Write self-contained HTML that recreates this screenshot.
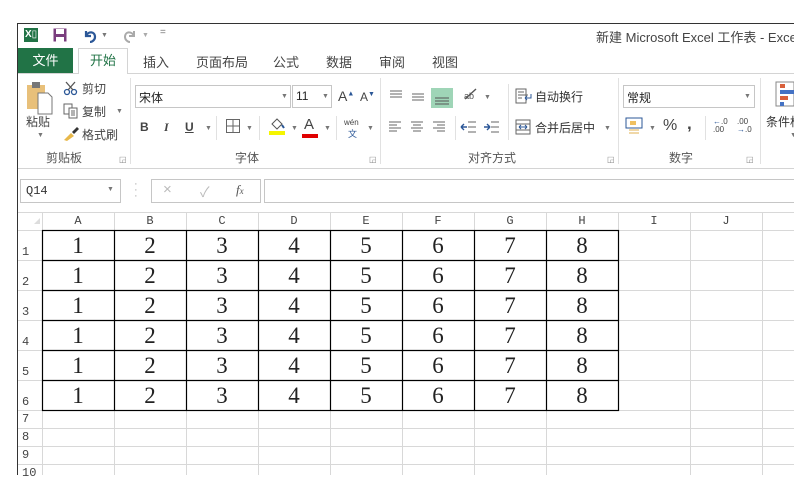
<!DOCTYPE html>
<html><head><meta charset="utf-8"><style>
*{margin:0;padding:0;box-sizing:border-box}
body{width:794px;height:475px;overflow:hidden;background:#fff;position:relative;font-family:"Liberation Sans","Noto Sans CJK SC",sans-serif;font-size:12px;color:#444}
.a{position:absolute;white-space:nowrap}
.cj{font-family:"Liberation Sans","Noto Sans CJK SC",sans-serif}
.sep{position:absolute;width:1px;background:#e1e1e1}
.dd{position:absolute;font-size:7px;color:#777}
.lbl{position:absolute;top:149px;font-size:12px;color:#555}
.col{position:absolute;top:213px;height:17px;font-family:"Liberation Mono",monospace;font-size:12px;color:#444;text-align:center;line-height:17px}
.rh{position:absolute;left:18px;width:24px;font-family:"Liberation Mono",monospace;font-size:12px;color:#444;padding-left:4px}
.n{position:absolute;width:72px;text-align:center;font-family:"Liberation Serif",serif;font-size:23px;color:#222}
</style></head><body>
<!-- window border -->
<div class="a" style="left:17px;top:23px;width:777px;height:1px;background:#333"></div>
<div class="a" style="left:17px;top:23px;width:1px;height:452px;background:#333"></div>

<!-- title bar -->
<div class="a" style="left:24px;top:28px;width:14px;height:14px;background:#217346;color:#fff;font-size:10px;font-weight:bold;line-height:14px;padding-left:1px">X<span style="font-weight:normal">▯</span></div>
<svg class="a" style="left:53px;top:28px" width="14" height="14"><rect x="0.5" y="0.5" width="13" height="13" fill="#7a3d7e"/><rect x="3" y="1" width="8" height="5" fill="#fff"/><rect x="3" y="9" width="8" height="5" fill="#fff"/></svg>
<svg class="a" style="left:82px;top:27px" width="16" height="16"><path d="M4 4 L4 9 L9 9" fill="none" stroke="#2b5797" stroke-width="2.2"/><path d="M4 9 C6 4 13 4 13 10 C13 13 10 15 8 15" fill="none" stroke="#2b5797" stroke-width="2.2"/></svg>
<div class="dd" style="left:101px;top:32px">▼</div>
<svg class="a" style="left:122px;top:27px" width="16" height="16"><path d="M12 4 L12 9 L7 9" fill="none" stroke="#aaa" stroke-width="2"/><path d="M12 9 C10 4 3 4 3 10 C3 13 6 15 8 15" fill="none" stroke="#aaa" stroke-width="2"/></svg>
<div class="dd" style="left:142px;top:32px;color:#aaa">▼</div>
<div class="a" style="left:160px;top:27px;font-size:10px;color:#777">=</div>
<div class="a" style="left:596px;top:27px;font-size:13px;color:#444">新建 Microsoft Excel 工作表 - Excel</div>

<!-- tabs -->
<div class="a" style="left:18px;top:48px;width:55px;height:25px;background:#217346;color:#fff;font-size:13px;text-align:center;line-height:25px">文件</div>
<div class="a" style="left:78px;top:48px;width:50px;height:26px;background:#fff;border:1px solid #d4d4d4;border-bottom:none;color:#217346;font-size:13px;text-align:center;line-height:24px;z-index:2">开始</div>
<div class="a" style="left:143px;top:52px;font-size:13px">插入</div>
<div class="a" style="left:196px;top:52px;font-size:13px">页面布局</div>
<div class="a" style="left:273px;top:52px;font-size:13px">公式</div>
<div class="a" style="left:326px;top:52px;font-size:13px">数据</div>
<div class="a" style="left:379px;top:52px;font-size:13px">审阅</div>
<div class="a" style="left:432px;top:52px;font-size:13px">视图</div>
<div class="a" style="left:18px;top:73px;width:776px;height:1px;background:#d4d4d4"></div>
<div class="a" style="left:18px;top:168px;width:776px;height:1px;background:#d4d4d4"></div>

<!-- clipboard -->
<svg class="a" style="left:26px;top:81px" width="28" height="34"><rect x="1" y="4" width="18" height="24" fill="#e8c07a"/><rect x="6" y="1" width="8" height="6" fill="#777"/><path d="M12 12 H22 L26 16 V33 H12 Z" fill="#fff" stroke="#777"/></svg>
<div class="a" style="left:26px;top:113px;font-size:12px">粘贴</div>
<div class="dd" style="left:37px;top:132px">▼</div>
<svg class="a" style="left:63px;top:80px" width="16" height="16"><circle cx="4" cy="12" r="2.5" fill="none" stroke="#2b5797" stroke-width="1.3"/><circle cx="11" cy="12" r="2.5" fill="none" stroke="#2b5797" stroke-width="1.3"/><path d="M5 10 L12 2 M10 10 L3 2" stroke="#555" stroke-width="1.3"/></svg>
<div class="a" style="left:82px;top:80px">剪切</div>
<svg class="a" style="left:63px;top:103px" width="16" height="16"><rect x="1" y="1" width="8" height="10" fill="#fff" stroke="#666"/><rect x="6" y="5" width="8" height="10" fill="#fff" stroke="#666"/><path d="M8 8h4M8 10h4M8 12h4" stroke="#666"/></svg>
<div class="a" style="left:82px;top:103px">复制</div>
<div class="dd" style="left:116px;top:108px">▼</div>
<svg class="a" style="left:63px;top:126px" width="17" height="15"><path d="M1 14 L8 7 L11 10 L4 15 Z" fill="#e8b84a"/><path d="M9 6 L14 1 L16 3 L11 8 Z" fill="#333"/></svg>
<div class="a" style="left:82px;top:126px">格式刷</div>
<div class="lbl" style="left:46px">剪贴板</div>
<div class="a" style="left:119px;top:155px;font-size:8px;color:#888">◲</div>
<div class="sep" style="left:130px;top:78px;height:86px"></div>

<!-- font group -->
<div class="a" style="left:135px;top:85px;width:156px;height:23px;border:1px solid #c6c6c6;padding:3px 3px;font-size:12px;color:#222">宋体</div>
<div class="dd" style="left:281px;top:93px">▼</div>
<div class="a" style="left:292px;top:85px;width:40px;height:23px;border:1px solid #c6c6c6;padding:3px 3px;font-size:12px;color:#222">11</div>
<div class="dd" style="left:322px;top:93px">▼</div>
<div class="a" style="left:338px;top:88px;font-size:14px;color:#444">A<sup style="font-size:7px;color:#2b5797">▲</sup></div>
<div class="a" style="left:360px;top:90px;font-size:12px;color:#444">A<sup style="font-size:7px;color:#2b5797">▼</sup></div>
<div class="a" style="left:140px;top:120px;font-weight:bold;color:#444">B</div>
<div class="a" style="left:164px;top:120px;font-style:italic;font-family:'Liberation Serif',serif;font-weight:bold;color:#444">I</div>
<div class="a" style="left:185px;top:120px;font-weight:bold;text-decoration:underline;color:#444">U</div>
<div class="dd" style="left:205px;top:125px">▼</div>
<div class="sep" style="left:216px;top:116px;height:24px"></div>
<svg class="a" style="left:226px;top:119px" width="14" height="14"><rect x="0.5" y="0.5" width="13" height="13" fill="none" stroke="#666"/><path d="M7 0V14M0 7H14" stroke="#666"/></svg>
<div class="dd" style="left:246px;top:125px">▼</div>
<div class="sep" style="left:259px;top:116px;height:24px"></div>
<svg class="a" style="left:268px;top:116px" width="18" height="20"><path d="M4 8 L9 3 L14 8 L9 13 Z" fill="#fff" stroke="#555"/><path d="M14 9 L16 12" stroke="#2b5797" stroke-width="2"/><rect x="1" y="15" width="16" height="4" fill="#f5f500"/></svg>
<div class="dd" style="left:291px;top:125px">▼</div>
<div class="a" style="left:304px;top:116px;font-size:15px;color:#444">A</div>
<div class="a" style="left:302px;top:134px;width:16px;height:4px;background:#e00000"></div>
<div class="dd" style="left:324px;top:125px">▼</div>
<div class="sep" style="left:336px;top:116px;height:24px"></div>
<div class="a" style="left:344px;top:118px;font-size:8px;color:#444">wén</div>
<div class="a" style="left:348px;top:127px;font-size:9px;color:#2b5797">文</div>
<div class="dd" style="left:367px;top:125px">▼</div>
<div class="lbl" style="left:235px">字体</div>
<div class="a" style="left:369px;top:155px;font-size:8px;color:#888">◲</div>
<div class="sep" style="left:380px;top:78px;height:86px"></div>

<!-- alignment -->
<svg class="a" style="left:388px;top:88px" width="90" height="20"><g stroke="#666"><path d="M2 3h12M2 6h12M2 9h12"/><path d="M24 6h12M24 9h12M24 12h12"/></g><rect x="43" y="0" width="22" height="20" fill="#9fd5b7"/><g stroke="#555"><path d="M47 10h14M47 13h14M47 16h14"/></g></svg>
<svg class="a" style="left:462px;top:87px" width="20" height="16"><path d="M3 12 L14 2" stroke="#555" stroke-width="1.4"/><text x="2" y="12" font-size="9" fill="#555" font-family="Liberation Sans">ab</text></svg>
<div class="dd" style="left:484px;top:94px">▼</div>
<svg class="a" style="left:388px;top:120px" width="120" height="14"><g stroke="#666"><path d="M1 2h12M1 5h8M1 8h12M1 11h8"/><path d="M23 2h12M25 5h8M23 8h12M25 11h8"/><path d="M45 2h12M49 5h8M45 8h12M49 11h8"/></g><g stroke="#2b5797" stroke-width="1.4"><path d="M73 7h6M73 7l3-3M73 7l3 3"/><path d="M96 7h6M102 7l-3-3M102 7l-3 3"/></g><g stroke="#666"><path d="M80 2h8M80 7h8M80 12h8M103 2h8M103 7h8M103 12h8"/></g></svg>
<div class="sep" style="left:455px;top:116px;height:24px"></div>
<div class="sep" style="left:508px;top:84px;height:56px"></div>
<svg class="a" style="left:515px;top:88px" width="18" height="16"><rect x="1" y="1" width="10" height="14" fill="#fff" stroke="#666"/><path d="M3 4h6M3 7h10M3 10h4" stroke="#666"/><path d="M16 6 V10 H10 M10 10 l2-2 M10 10 l2 2" stroke="#2b5797" fill="none"/></svg>
<div class="a" style="left:535px;top:88px;color:#333">自动换行</div>
<svg class="a" style="left:515px;top:119px" width="16" height="16"><rect x="1" y="1" width="14" height="14" fill="#fff" stroke="#666"/><path d="M1 5h14M1 11h14" stroke="#666"/><path d="M4 8h8M4 8l2-2M4 8l2 2M12 8l-2-2M12 8l-2 2" stroke="#2b5797" fill="none"/></svg>
<div class="a" style="left:535px;top:119px;color:#333">合并后居中</div>
<div class="dd" style="left:604px;top:125px">▼</div>
<div class="lbl" style="left:468px">对齐方式</div>
<div class="a" style="left:607px;top:155px;font-size:8px;color:#888">◲</div>
<div class="sep" style="left:618px;top:78px;height:86px"></div>

<!-- number -->
<div class="a" style="left:623px;top:85px;width:132px;height:23px;border:1px solid #c6c6c6;padding:3px 3px;font-size:12px;color:#222">常规</div>
<div class="dd" style="left:744px;top:93px">▼</div>
<svg class="a" style="left:625px;top:117px" width="20" height="18"><rect x="1" y="1" width="16" height="10" fill="#fff" stroke="#2b5797"/><rect x="5" y="4" width="6" height="4" fill="#f0c060"/><path d="M4 13h10M4 16h10" stroke="#e0b050"/></svg>
<div class="dd" style="left:649px;top:125px">▼</div>
<div class="a" style="left:663px;top:117px;font-size:16px;color:#444">%</div>
<div class="a" style="left:687px;top:114px;font-size:17px;font-weight:bold;color:#444">,</div>
<div class="sep" style="left:705px;top:116px;height:24px"></div>
<div class="a" style="left:713px;top:118px;font-size:8px;line-height:8px;color:#444"><span style="color:#2b5797">←</span>.0<br>.00</div>
<div class="a" style="left:737px;top:118px;font-size:8px;line-height:8px;color:#444">.00<br><span style="color:#2b5797">→</span>.0</div>
<div class="lbl" style="left:669px">数字</div>
<div class="a" style="left:746px;top:155px;font-size:8px;color:#888">◲</div>
<div class="sep" style="left:760px;top:78px;height:86px"></div>
<svg class="a" style="left:775px;top:81px" width="19" height="30"><rect x="1" y="1" width="18" height="24" fill="#fff" stroke="#888"/><rect x="5" y="3" width="5" height="4" fill="#d9603b"/><rect x="5" y="9" width="14" height="4" fill="#4472c4"/><rect x="5" y="15" width="8" height="4" fill="#d9603b"/><rect x="5" y="21" width="4" height="4" fill="#4472c4"/></svg>
<div class="a" style="left:766px;top:113px;font-size:12px;color:#333">条件格</div>
<div class="dd" style="left:790px;top:132px">▼</div>

<!-- formula bar -->
<div class="a" style="left:20px;top:179px;width:101px;height:24px;border:1px solid #c6c6c6;font-family:'Liberation Mono',monospace;font-size:12px;padding:4px 5px;color:#333">Q14</div>
<div class="dd" style="left:107px;top:186px">▼</div>
<div class="a" style="left:134px;top:181px;font-size:11px;color:#aaa;line-height:6px">·<br>·<br>·</div>
<div class="a" style="left:151px;top:179px;width:110px;height:24px;border:1px solid #c6c6c6"></div>
<div class="a" style="left:163px;top:181px;font-size:15px;color:#bbb">×</div>
<div class="a" style="left:200px;top:182px;font-size:14px;color:#bbb">✓</div>
<div class="a" style="left:236px;top:182px;font-family:'Liberation Serif',serif;font-style:italic;font-size:13px;color:#555">f<span style="font-size:9px">x</span></div>
<div class="a" style="left:264px;top:179px;width:540px;height:24px;border:1px solid #c6c6c6"></div>

<!-- grid -->
<svg class="a" style="left:18px;top:210px" width="776" height="265">
<rect x="0" y="0" width="776" height="265" fill="#fff"/>
<path d="M16 14 L22 8 L22 14 Z" fill="#ddd"/>
<g stroke="#d8d8d8" stroke-width="1">
<path d="M0 2.5H776"/>
<path d="M24.5 3V265"/>
<path d="M0 20.5H776"/>
<path d="M672.5 3V265M744.5 3V265"/>
<path d="M96.5 3V20M168.5 3V20M240.5 3V20M312.5 3V20M384.5 3V20M456.5 3V20M528.5 3V20M600.5 3V20"/>
<path d="M96.5 200V265M168.5 200V265M240.5 200V265M312.5 200V265M384.5 200V265M456.5 200V265M528.5 200V265"/>
<path d="M600 50.5H776M600 80.5H776M600 110.5H776M600 140.5H776M600 170.5H776M600 200.5H776"/>
<path d="M0 50.5H24M0 80.5H24M0 110.5H24M0 140.5H24M0 170.5H24M0 200.5H24"/>
<path d="M0 218.5H776M0 236.5H776M0 254.5H776"/>
</g>
<path d="M24 20.5H600" stroke="#aaa"/>
<g stroke="#000" stroke-width="1.2" fill="none">
<rect x="24.5" y="20.5" width="576" height="180"/>
<path d="M24 50.5H600M24 80.5H600M24 110.5H600M24 140.5H600M24 170.5H600"/>
<path d="M96.5 20V200M168.5 20V200M240.5 20V200M312.5 20V200M384.5 20V200M456.5 20V200M528.5 20V200"/>
</g>
</svg>

<div class="col" style="left:42px;width:72px">A</div>
<div class="col" style="left:114px;width:72px">B</div>
<div class="col" style="left:186px;width:72px">C</div>
<div class="col" style="left:258px;width:72px">D</div>
<div class="col" style="left:330px;width:72px">E</div>
<div class="col" style="left:402px;width:72px">F</div>
<div class="col" style="left:474px;width:72px">G</div>
<div class="col" style="left:546px;width:72px">H</div>
<div class="col" style="left:618px;width:72px">I</div>
<div class="col" style="left:690px;width:72px">J</div>

<div class="rh" style="top:245px">1</div>
<div class="rh" style="top:275px">2</div>
<div class="rh" style="top:305px">3</div>
<div class="rh" style="top:335px">4</div>
<div class="rh" style="top:365px">5</div>
<div class="rh" style="top:395px">6</div>
<div class="rh" style="top:412px">7</div>
<div class="rh" style="top:430px">8</div>
<div class="rh" style="top:448px">9</div>
<div class="rh" style="top:466px">10</div>

<div id="nums"></div>
<div class="n" style="left:42px;top:233px">1</div><div class="n" style="left:114px;top:233px">2</div><div class="n" style="left:186px;top:233px">3</div><div class="n" style="left:258px;top:233px">4</div><div class="n" style="left:330px;top:233px">5</div><div class="n" style="left:402px;top:233px">6</div><div class="n" style="left:474px;top:233px">7</div><div class="n" style="left:546px;top:233px">8</div>
<div class="n" style="left:42px;top:263px">1</div><div class="n" style="left:114px;top:263px">2</div><div class="n" style="left:186px;top:263px">3</div><div class="n" style="left:258px;top:263px">4</div><div class="n" style="left:330px;top:263px">5</div><div class="n" style="left:402px;top:263px">6</div><div class="n" style="left:474px;top:263px">7</div><div class="n" style="left:546px;top:263px">8</div>
<div class="n" style="left:42px;top:293px">1</div><div class="n" style="left:114px;top:293px">2</div><div class="n" style="left:186px;top:293px">3</div><div class="n" style="left:258px;top:293px">4</div><div class="n" style="left:330px;top:293px">5</div><div class="n" style="left:402px;top:293px">6</div><div class="n" style="left:474px;top:293px">7</div><div class="n" style="left:546px;top:293px">8</div>
<div class="n" style="left:42px;top:323px">1</div><div class="n" style="left:114px;top:323px">2</div><div class="n" style="left:186px;top:323px">3</div><div class="n" style="left:258px;top:323px">4</div><div class="n" style="left:330px;top:323px">5</div><div class="n" style="left:402px;top:323px">6</div><div class="n" style="left:474px;top:323px">7</div><div class="n" style="left:546px;top:323px">8</div>
<div class="n" style="left:42px;top:353px">1</div><div class="n" style="left:114px;top:353px">2</div><div class="n" style="left:186px;top:353px">3</div><div class="n" style="left:258px;top:353px">4</div><div class="n" style="left:330px;top:353px">5</div><div class="n" style="left:402px;top:353px">6</div><div class="n" style="left:474px;top:353px">7</div><div class="n" style="left:546px;top:353px">8</div>
<div class="n" style="left:42px;top:383px">1</div><div class="n" style="left:114px;top:383px">2</div><div class="n" style="left:186px;top:383px">3</div><div class="n" style="left:258px;top:383px">4</div><div class="n" style="left:330px;top:383px">5</div><div class="n" style="left:402px;top:383px">6</div><div class="n" style="left:474px;top:383px">7</div><div class="n" style="left:546px;top:383px">8</div>
</body></html>
